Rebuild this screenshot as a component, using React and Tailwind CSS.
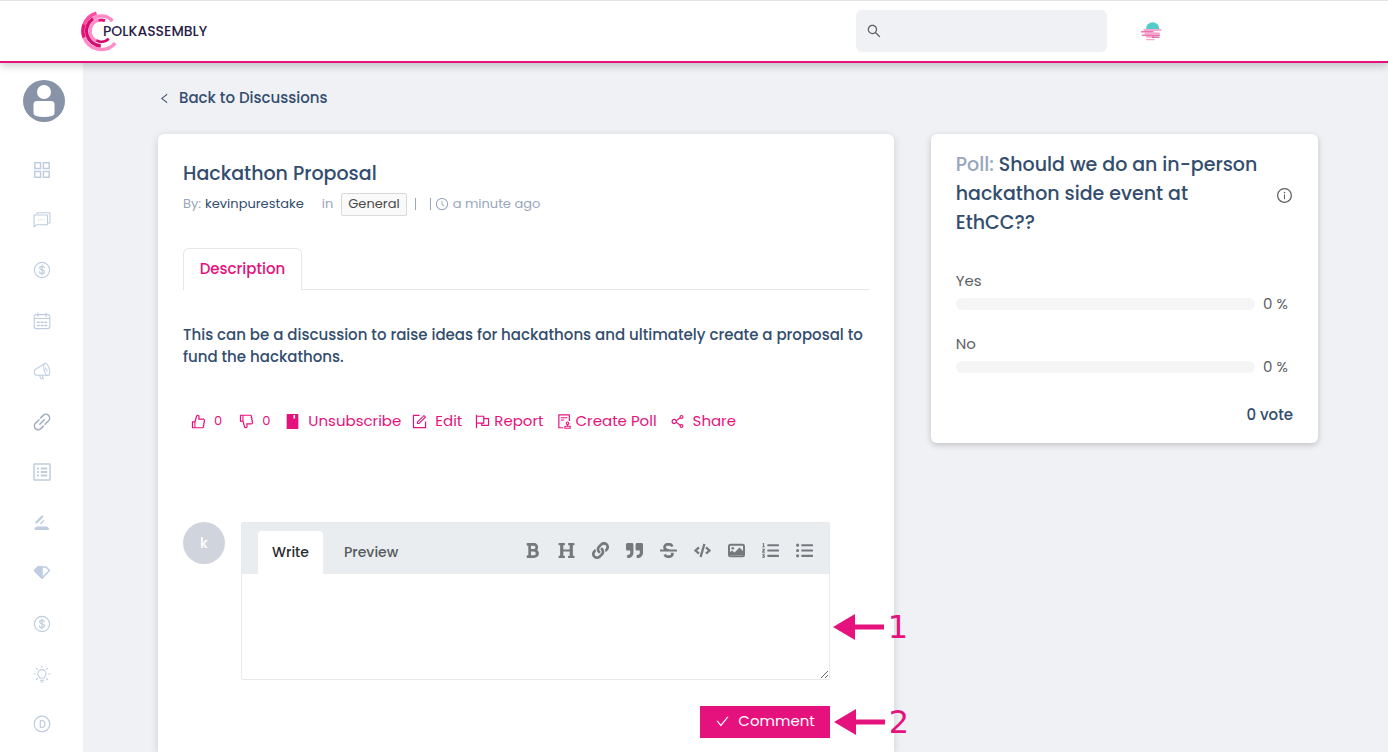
import React from "react";
import {
  AiOutlineSearch, AiOutlineLeft, AiOutlineClockCircle, AiOutlineLike, AiOutlineDislike, AiFillBook,
  AiOutlineForm, AiOutlineFlag, AiOutlineAudit, AiOutlineShareAlt, AiOutlineInfoCircle, AiOutlineCheck,
  AiOutlineAppstore,
} from "react-icons/ai";
import { FaBold, FaHeading, FaLink, FaQuoteRight, FaStrikethrough, FaCode, FaListOl, FaListUl } from "react-icons/fa";

function arc(r, from, to) {
  const point = (deg) => {
    const a = (deg * Math.PI) / 180;
    return `${(21.3 + r * Math.cos(a)).toFixed(2)} ${(21 + r * Math.sin(a)).toFixed(2)}`;
  };
  const large = from - to > 180 ? 1 : 0;
  return `M${point(from)}A${r} ${r} 0 ${large} 0 ${point(to)}`;
}

function Logo() {
  return (
    <svg viewBox="0 0 42 42" className="size-[42px]" fill="none" strokeWidth="3.5" aria-hidden="true">
      <path d={arc(18.4, 162, 41)} stroke="#ff8cc6" />
      <path d={arc(18.4, 255, 199)} stroke="#ff4ba2" />
      <path d={arc(18.4, 200, 160)} stroke="#e5127d" />
      <path d={arc(15, 318, 234)} stroke="#ff8cc6" />
      <path d={arc(14.8, 236, 92)} stroke="#d3106f" />
      <path d={arc(11.2, 258, 115)} stroke="#ff8cc6" />
      <path d={arc(11, 290, 256)} stroke="#e5127d" strokeWidth="2.800" />
      <path d={arc(10.8, 117, 46)} stroke="#d3106f" strokeWidth="2.800" />
    </svg>
  );
}

function NetworkIcon() {
  return (
    <svg viewBox="0 0 22 20" className="h-5 w-[22px]" aria-hidden="true">
      <path d="M6 8a6.7 6.7 0 0 1 13.4 0Z" fill="#53cbc9" />
      <g strokeLinecap="round">
        <path d="M4.500 9H20.500M5.500 12.600H18M7 15.800H13" stroke="#f7a8d0" strokeWidth="2" />
        <path d="M1.500 10.800H13M2.500 14.300H19.500" stroke="#ea74af" strokeWidth="1.500" />
        <path d="M10.500 12.400H19.500M6.500 18.600H14" stroke="#f4a5cc" strokeWidth="1.200" />
        <path d="M12.500 16.200H19" stroke="#d84c96" strokeWidth="1.200" />
      </g>
    </svg>
  );
}

function Icon({ children, stroke = 1.1, color = "text-[#bfcde0]" }) {
  return (
    <svg viewBox="0 0 18 18" className={`size-[18px] ${color}`} fill="none" stroke="currentColor" strokeWidth={stroke} strokeLinejoin="round" strokeLinecap="round" aria-hidden="true">
      {children}
    </svg>
  );
}

const Dollar = () => (
  <Icon stroke={1.2}>
    <circle cx="9" cy="9" r="7.600" />
    <path d="M11.400 6.900c-.2-1-1.100-1.500-2.400-1.500s-2.300.6-2.300 1.700c0 2.400 4.800 1.200 4.800 3.700 0 1.100-1 1.800-2.500 1.800s-2.400-.6-2.600-1.700M9 4.200v9.600" />
  </Icon>
);

const navItems = [
  ["Overview", <AiOutlineAppstore className="size-[22px] text-[#bfcde0]" />],
  ["Discussions", <Icon><path d="M4 3V1.700h13V12h-1.700" /><path d="M1 4h13.500v9.700H3.500L1 16Z" /><path d="M5.500 8.800h.1M7.700 8.800h.1M9.900 8.800h.1" /></Icon>],
  ["Treasury", <Dollar />],
  ["Calendar", <Icon><rect x="1.200" y="2.600" width="15.600" height="14" rx="2" /><path d="M1.200 6.500h15.600M5 1v3.500M13 1v3.500" /><path d="M4.300 10.200h2M8 10.200h2M11.700 10.200h2M4.300 13.500h2M8 13.500h2M11.700 13.500h2" strokeWidth="1.400" /></Icon>],
  ["News", <Icon><path d="M12 1.500 2.500 7.300C.5 8.700 1 12.500 3 13.200L15.500 13.300" /><ellipse cx="13.700" cy="7.500" rx="2.600" ry="6.200" transform="rotate(-15 13.700 7.500)" /><path d="M6.500 13.400 8 16.800h2.300L9.300 13.400" /><path d="m12.500 6 1.500 3" /></Icon>],
  ["Links", <Icon stroke={1.500} color="text-[#9fadc3]"><path d="m7.700 4.900 2.500-2.500a3.700 3.700 0 0 1 5.300 5.300L12 11.200M10.300 13.100l-2.500 2.500a3.700 3.700 0 0 1-5.300-5.300L6 6.800M6.800 11.200l4.400-4.400" /></Icon>],
  ["Proposals", <Icon stroke={1.500}><rect x="1" y="1" width="16" height="16" rx=".5" /><path d="M4.800 5.500h.5M4.800 9h.5M4.800 12.500h.5M8.500 5.500h5M8.500 9h5M8.500 12.500h5" strokeWidth="1.800" /></Icon>],
  ["Referenda", <Icon><path d="m3.300 8.500 6-6" strokeWidth="2.200" /><path d="m7.800 9.500 3-3" strokeWidth="1.300" /><path d="M1.500 16c0-2 1-3.500 3-3.500h8.500c2 0 3 1.500 3 3.500Z" fill="currentColor" stroke="none" /></Icon>],
  ["Motions", <Icon stroke={1.500}><path d="M5 3h8L16.500 6.500 9 14.100 1.500 6.500Z" /><path d="M5 3h4v11L1.500 6.500Z" fill="currentColor" /></Icon>],
  ["Bounties", <Dollar />],
  ["Tips", <Icon><path d="M6.800 13c0-1.300-1.900-2-1.900-4.300a4.100 4.100 0 0 1 8.200 0c0 2.300-1.900 3-1.900 4.300ZM7.200 15.300h3.600M8 17h2M9 1v1.200M1 9h1.300M15.700 9H17M3.400 3.300l1 1M14.600 3.300l-1 1M3.400 14.500l1-1M14.600 14.500l-1-1" /></Icon>],
  ["Council", <Icon stroke={1.200}><circle cx="9" cy="9" r="7.800" /><path d="M7.300 5.500h1.200c2 0 3.400 1.500 3.400 3.500s-1.400 3.500-3.400 3.500H7.300Z" /></Icon>],
];

function ImageIcon({ className }) {
  return (
    <svg viewBox="0 0 17 17" className={className} aria-hidden="true">
      <rect x="1" y="2.800" width="15" height="11.400" rx="1.500" fill="none" stroke="currentColor" strokeWidth="2" />
      <circle cx="4.800" cy="6.300" r="1.300" fill="currentColor" />
      <path d="M1.500 13V10.500l2.500-2 2.500 2 5-5 4 4V13Z" fill="currentColor" />
    </svg>
  );
}

const tools = [
  ["Bold", FaBold], ["Heading", FaHeading], ["Link", FaLink], ["Quote", FaQuoteRight], ["Strikethrough", FaStrikethrough],
  ["Code", FaCode], ["Image", ImageIcon], ["Ordered list", FaListOl], ["Unordered list", FaListUl],
];

function Header() {
  return (
    <header className="relative z-10 flex h-[63px] shrink-0 items-center justify-between border-t border-b-2 border-t-[#e3e3e3] border-b-[#e5127d] bg-white pr-[226px] pl-20 shadow-[0_3px_8px_rgba(0,0,0,0.2)]">
      <a href="#home" className="flex items-center text-sm font-medium text-[#2b1d4a]">
        <Logo />
        <span className="-ml-[19px]">POLKASSEMBLY</span>
      </a>
      <div className="flex items-center gap-[33px]">
        <label className="flex h-[42px] w-[251px] items-center gap-2 rounded-md bg-[#f0f1f5] px-[10px] text-[#5d6166]">
          <AiOutlineSearch className="size-4" aria-hidden="true" />
          <input type="search" aria-label="Search" className="min-w-0 flex-1 bg-transparent text-sm outline-none" />
        </label>
        <button type="button" aria-label="Network"><NetworkIcon /></button>
      </div>
    </header>
  );
}

function Sidebar() {
  return (
    <aside className="flex w-[83px] shrink-0 flex-col items-center bg-white pt-[17px] pb-[18px]">
      <button type="button" aria-label="Account" className="ml-1">
        <svg viewBox="0 0 42 42" className="size-[42px]" aria-hidden="true">
          <circle cx="21" cy="21" r="21" fill="#8893a7" />
          <circle cx="21" cy="12" r="7" fill="#fff" />
          <path d="M14 21h14q3.500 0 3.500 3.500V33q0 2-2 2.700-8.500 2.800-17 0-2-.7-2-2.700v-8.500Q10.500 21 14 21Z" fill="#fff" />
        </svg>
      </button>
      <nav className="mt-[38px] flex grow flex-col items-center justify-between">
        {navItems.map(([label, icon]) => (
          <a key={label} href="#nav" aria-label={label} className="flex h-[19px] items-center">{icon}</a>
        ))}
      </nav>
    </aside>
  );
}

function Callout({ number }) {
  return (
    <div className="absolute top-1/2 left-full flex -translate-y-1/2 items-center gap-1 pl-1 font-['DejaVu_Sans',sans-serif] text-[32px] leading-8 text-[#e5127d]">
      <svg viewBox="0 0 51 26" className="h-[26px] w-[51px]" fill="currentColor" aria-hidden="true">
        <path d="M0 13 22 0v10.500h29v5H22V26Z" />
      </svg>
      <span>{number}</span>
    </div>
  );
}

function Editor() {
  return (
    <div className="mt-[89px] mr-[39px] flex items-start gap-4">
      <div className="flex size-[42px] shrink-0 items-center justify-center rounded-full bg-[#d0d4dc] text-sm font-medium text-white">k</div>
      <form className="flex min-w-0 flex-1 flex-col items-end" onSubmit={(e) => e.preventDefault()}>
        <div className="w-full rounded-xs border border-[#e6eaed]">
          <div className="flex h-[51px] items-end justify-between bg-[#e9edf0] pr-[7px] pl-4 text-[#75797c]">
            <div className="flex text-sm font-medium text-[#55595c]">
              <button type="button" className="h-[43px] w-[65px] rounded-t bg-white pb-0.5 text-[#2b2d2f]">Write</button>
              <button type="button" className="h-[43px] px-[21px] pb-0.5">Preview</button>
            </div>
            <div className="flex h-12 items-center">
              {tools.map(([label, Tool]) => (
                <button key={label} type="button" aria-label={label} className="flex w-[34px] justify-center">
                  <Tool className="size-[17px]" />
                </button>
              ))}
            </div>
          </div>
          <div className="relative">
            <textarea aria-label="Comment text" className="block h-[105px] w-full resize-y p-3 text-sm outline-none" />
            <Callout number="1" />
          </div>
        </div>
        <div className="relative mt-[26px]">
          <button type="submit" className="flex h-8 items-center gap-2 bg-[#e5127d] px-[15px] pb-0.5 text-[15px] text-white">
            <AiOutlineCheck className="size-[15px]" aria-hidden="true" />
            Comment
          </button>
          <Callout number="2" />
        </div>
      </form>
    </div>
  );
}

function Action({ icon: I, children, className }) {
  return (
    <button type="button" className={`flex items-center ${className}`}>
      <I className="size-[17px]" aria-hidden="true" />
      {children}
    </button>
  );
}

function Post() {
  return (
    <article className="flex flex-col rounded-t-md bg-white px-[25px] pt-[26px] pb-[13px] shadow-[0_2px_8px_rgba(0,0,0,0.15)]">
      <h1 className="text-[19px] leading-7 font-medium">Hackathon Proposal</h1>
      <div className="mt-1 flex h-6 items-center text-[13px] text-[#97a6bc]">
        <span>By:</span>
        <a href="#author" className="ml-1 text-[#334d6e]">kevinpurestake</a>
        <span className="ml-[18px]">in</span>
        <a href="#topic" className="ml-2 flex h-[23px] items-center rounded-xs border border-[#d9d9d9] bg-[#fafafa] px-[6px] text-[#4a4a4a]">General</a>
        <span className="ml-2 h-3 w-px bg-[#97a6bc]" />
        <span className="mr-1 ml-[14px] h-3 w-px bg-[#97a6bc]" />
        <AiOutlineClockCircle className="mr-1 size-[14px]" aria-hidden="true" />
        <span>a minute ago</span>
      </div>
      <div className="mt-8 flex">
        <button type="button" className="h-[42px] w-[119px] rounded-t-md border border-b-0 border-[#e5e7eb] text-[15px] font-medium text-[#e5127d]">Description</button>
        <div className="flex-1 border-b border-[#e5e7eb]" />
      </div>
      <p className="mt-[34px] text-[15px] leading-[22px] font-medium">
        This can be a discussion to raise ideas for hackathons and ultimately create a proposal to fund the hackathons.
      </p>
      <div className="mt-[41px] flex h-6 items-center pl-[7px] text-[15px] whitespace-nowrap text-[#e5127d]">
        <Action icon={AiOutlineLike} className="gap-[7px] text-[13px]">0</Action>
        <Action icon={AiOutlineDislike} className="ml-4 gap-[7px] text-[13px]">0</Action>
        <Action icon={AiFillBook} className="ml-[14px] gap-[7px]">Unsubscribe</Action>
        <Action icon={AiOutlineForm} className="ml-[10px] gap-[7px]">Edit</Action>
        <Action icon={AiOutlineFlag} className="ml-3 gap-[3px]">Report</Action>
        <Action icon={AiOutlineAudit} className="ml-3 gap-[3px]">Create Poll</Action>
        <Action icon={AiOutlineShareAlt} className="ml-3 gap-[7px]">Share</Action>
      </div>
      <Editor />
    </article>
  );
}

function PollOption({ label }) {
  return (
    <div className="text-[15px] leading-[22px] text-[#5d6166]">
      <div>{label}</div>
      <div className="flex h-6 items-center gap-2">
        <div role="progressbar" aria-label={label} aria-valuenow={0} className="h-3 flex-1 rounded-full bg-[#f5f5f5]" />
        <span className="w-[30px] whitespace-nowrap">0 %</span>
      </div>
    </div>
  );
}

function Poll() {
  return (
    <section className="rounded-md bg-white px-[25px] pt-4 pb-[17px] shadow-[0_2px_6px_rgba(0,0,0,0.2)]">
      <div className="flex items-center justify-between">
        <h2 className="w-[306px] text-[19px] leading-[29px] font-medium"><span className="text-[#97a6bc]">Poll:</span> Should we do an in-person hackathon side event at EthCC??</h2>
        <AiOutlineInfoCircle className="mt-1 size-[17px] shrink-0 text-[#5d6166]" aria-hidden="true" />
      </div>
      <div className="mt-[33px] flex flex-col gap-[17px]">
        <PollOption label="Yes" />
        <PollOption label="No" />
      </div>
      <div className="mt-[25px] text-right text-[15px] leading-[22px] font-medium">0 vote</div>
    </section>
  );
}

export default function App() {
  return (
    <div className="flex min-h-screen flex-col bg-[#f0f1f5] font-['Poppins','Inter',sans-serif] text-[#334d6e]">
      <Header />
      <div className="flex grow">
        <Sidebar />
        <main className="flex min-w-0 flex-1 flex-col pr-[70px] pl-[75px]">
          <a href="#discussions" className="mt-[23px] flex h-6 items-center gap-2 text-[15px] font-medium">
            <AiOutlineLeft className="size-[13px]" aria-hidden="true" />
            Back to Discussions
          </a>
          <div className="mt-6 grid grow grid-cols-[19fr_10fr] gap-[37px]">
            <Post />
            <div><Poll /></div>
          </div>
        </main>
      </div>
    </div>
  );
}
